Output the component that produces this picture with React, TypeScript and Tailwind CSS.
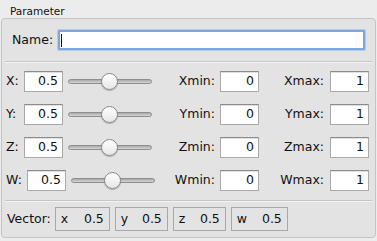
const ROWS = [
  { axis: 'X', value: '0.5', min: '0', max: '1' },
  { axis: 'Y', value: '0.5', min: '0', max: '1' },
  { axis: 'Z', value: '0.5', min: '0', max: '1' },
  { axis: 'W', value: '0.5', min: '0', max: '1' },
]

const VECTOR = [
  { key: 'x', value: '0.5', width: 'w-[55px]' },
  { key: 'y', value: '0.5', width: 'w-[53px]' },
  { key: 'z', value: '0.5', width: 'w-[53px]' },
  { key: 'w', value: '0.5', width: 'w-[57px]' },
]

function NumberField({ value }: { value: string }) {
  return (
    <div className="flex h-[21px] w-[39px] items-center justify-end border border-[#a9a9a9] border-t-[#8c8c8c] bg-white pr-[4px] shadow-[inset_0_1px_0_#e0e0e0]">
      {value}
    </div>
  )
}

function Slider() {
  return (
    <div className="relative flex h-[21px] w-[84px] items-center">
      <div className="h-[5px] w-full rounded-full border border-[#8e8e8e] bg-gradient-to-b from-[#a9a9a9] to-[#d6d6d6]" />
      <div className="absolute left-[33px] top-[2px] h-[17px] w-[17px] rounded-full border border-[#8a8a8a] bg-gradient-to-b from-white to-[#e6e6e6] shadow-[0_1px_1px_rgba(0,0,0,0.25)]" />
    </div>
  )
}

function Separator() {
  return (
    <div className="mx-[3px]">
      <div className="h-px bg-[#c6c6c6]" />
      <div className="h-px bg-[#f3f3f3]" />
    </div>
  )
}

export default function App() {
  return (
    <div className="h-[241px] w-[377px] overflow-hidden bg-[#ececec] font-['DejaVu_Sans',sans-serif] text-[12.5px] text-[#111]">
      <div className="h-[18px] pl-[10px] pt-[5px] text-[10.5px] leading-[13px]">Parameter</div>
      <div className="ml-[1px] h-[220px] w-[375px] rounded-[4px] border border-[#c4c4c4] bg-[#e3e3e3]">
        <div className="flex items-center pl-[10px] pt-[11px]">
          <span>Name:</span>
          <div className="relative ml-[5px] h-[20px] w-[307px] rounded-[1px] border-2 border-[#7fa5dc] bg-white ring-1 ring-[#b3cbec]">
            <div className="absolute left-[1px] top-[2px] h-[13px] w-px bg-black" />
          </div>
        </div>
        <div className="mt-[11px]">
          <Separator />
        </div>
        <div className="mt-[8px] flex flex-col gap-[12px]">
          {ROWS.map((row) => (
            <div key={row.axis} className="flex h-[21px] items-center pl-[4px]">
              <div className="flex w-[154px] items-center gap-[5px]">
                <span className="min-w-[13px]">{row.axis}:</span>
                <NumberField value={row.value} />
                <Slider />
              </div>
              <span className="w-[55px] text-right">{row.axis}min:</span>
              <div className="ml-[5px]">
                <NumberField value={row.min} />
              </div>
              <span className="w-[65px] text-right">{row.axis}max:</span>
              <div className="ml-[6px]">
                <NumberField value={row.max} />
              </div>
            </div>
          ))}
        </div>
        <div className="mt-[9px]">
          <Separator />
        </div>
        <div className="mt-[5px] flex items-center gap-[5px] pl-[5px]">
          <span className="mr-[-1px]">Vector:</span>
          {VECTOR.map((item) => (
            <div key={item.key} className={`flex h-[24px] ${item.width} items-center justify-between border border-[#a8a8a8] px-[5px]`}>
              <span>{item.key}</span>
              <span>{item.value}</span>
            </div>
          ))}
        </div>
      </div>
    </div>
  )
}
